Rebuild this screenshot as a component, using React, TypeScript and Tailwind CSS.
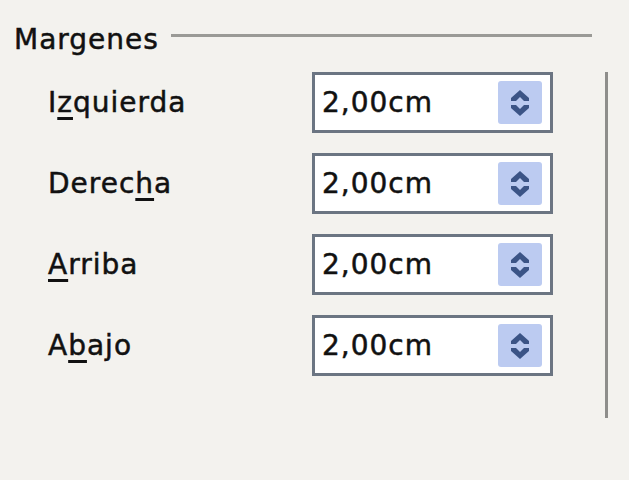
import { ReactNode } from "react"

const font = {
  fontFamily: '"DejaVu Sans", Verdana, sans-serif',
  WebkitTextStroke: "0.5px #111",
}

// Up/down chevrons inside the spin button
const SpinArrows = () => (
  <svg width="24" height="32" viewBox="0 0 24 32">
    <path d="M12 3 L21 11 L21 14 L16 14 L12 10 L8 14 L3 14 L3 11 Z" fill="#3b5486" />
    <path d="M12 29 L21 21 L21 18 L16 18 L12 22 L8 18 L3 18 L3 21 Z" fill="#3b5486" />
  </svg>
)

const SpinField = ({ value }: { value: string }) => (
  <div className="w-[241px] h-[61px] border-[3px] border-[#6b7582] bg-white flex items-center pl-[7px] pr-[8px]">
    <span className="flex-1 text-[28px] leading-[34px] tracking-[1px] text-[#111]" style={font}>
      {value}
    </span>
    <div className="w-[44px] h-[43px] rounded-[3px] bg-[#bccbf1] flex items-center justify-center">
      <SpinArrows />
    </div>
  </div>
)

const Row = ({ label }: { label: ReactNode }) => (
  <div className="flex items-center h-[61px]">
    <div className="w-[264px] text-[28px] leading-[34px] tracking-[1px] text-[#111]" style={font}>
      {label}
    </div>
    <SpinField value="2,00cm" />
  </div>
)

const U = ({ children }: { children: ReactNode }) => (
  <span className="underline decoration-[3px] underline-offset-[5px]">{children}</span>
)

export default function App() {
  return (
    <div className="w-[629px] h-[480px] bg-[#f3f2ee] pt-[23px] overflow-hidden">
      <div className="flex items-start pl-[14px]">
        <span className="text-[28px] leading-[34px] tracking-[1px] text-[#111]" style={font}>
          Margenes
        </span>
        <div className="flex-1 h-[3px] bg-[#9a9a96] mt-[11px] ml-[12px] mr-[37px]" />
      </div>
      <div className="flex mt-[15px]">
        <div className="flex flex-col gap-[20px] pl-[48px]">
          <Row label={<>I<U>z</U>quierda</>} />
          <Row label={<>Derec<U>h</U>a</>} />
          <Row label={<><U>A</U>rriba</>} />
          <Row label={<>A<U>b</U>ajo</>} />
        </div>
        <div className="ml-[52px] w-[3px] h-[346px] bg-[#8e8e8b]" />
      </div>
    </div>
  )
}
